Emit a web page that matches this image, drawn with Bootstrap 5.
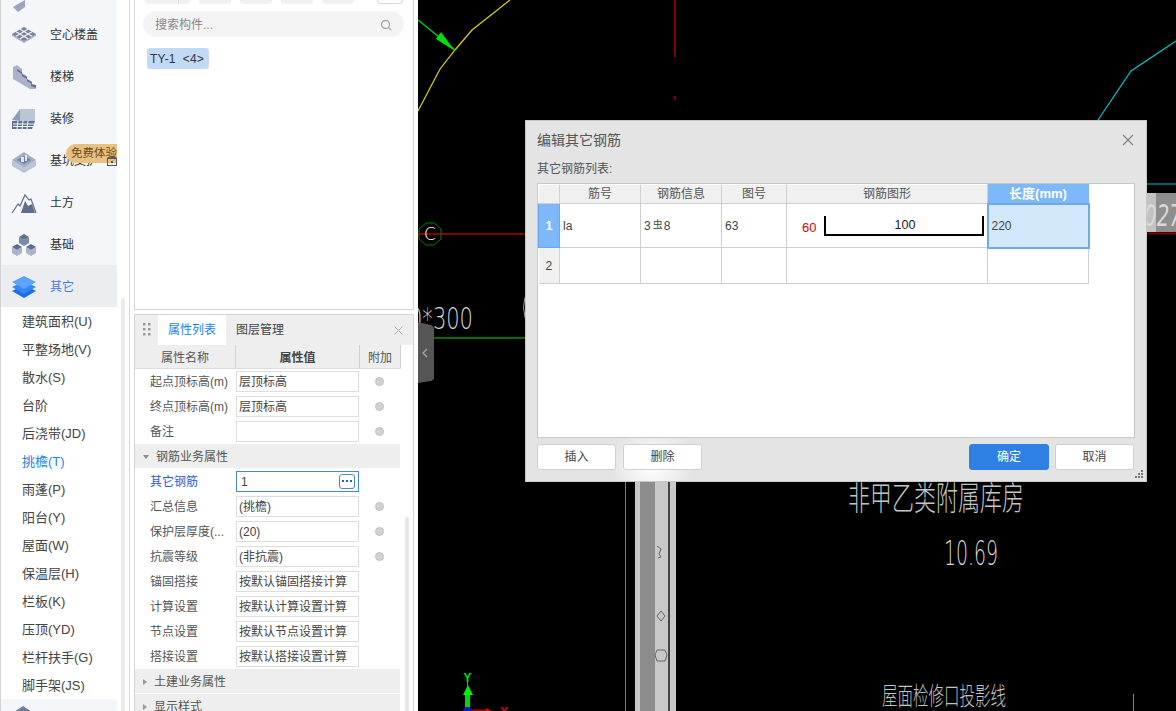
<!doctype html>
<html lang="zh-CN">
<head>
    <meta charset="utf-8">
    <title>编辑其它钢筋</title>
    <link href="https://cdn.jsdelivr.net/npm/bootstrap@5.3.3/dist/css/bootstrap.min.css" rel="stylesheet">
    <style>
        html, body { height: 711px; overflow: hidden; }
        body {
            background: #fff;
            font-family: "Liberation Sans", "Noto Sans CJK SC", sans-serif;
            font-size: 12px;
            color: #444;
            line-height: 1;
        }
        .app-shell { height: 711px; }

        /* left nav */
        .side-nav { width: 117px; flex: none; border-left: 1px solid #d4d4d4; }
        .nav-main { height: 42px; flex: none; padding: 2px 0 0 10px; gap: 13px; background: #f5f6f9; color: #333; }
        .nav-main > svg { width: 26px; height: 26px; flex: none; }
        .nav-clip-top { height: 13px; flex: none; overflow: hidden; background: #f5f6f9; padding-left: 10px; }
        .nav-clip-bottom { height: 12px; flex: none; overflow: hidden; background: #f5f6f9; padding: 2px 0 0 10px; }
        .nav-on { background: #ecedf1; color: #3f7de8; }
        .nav-sub { height: 28px; flex: none; padding-left: 21px; font-size: 13px; color: #444; background: #fff; }
        .nav-sub-on { color: #1c84f0; }
        .free-tag {
            position: absolute; left: 65px; top: 5px; width: 51px; height: 19px;
            background: #e8c080; color: #6b4a1e; border-radius: 10px 0 0 10px;
            font-size: 11.500px; line-height: 19px; padding-left: 5px; white-space: nowrap; overflow: hidden;
        }
        .nav-main > svg.nav-lock { position: absolute; left: 106px; top: 16px; width: 10px; height: 11px; }
        .nav-gutter { width: 13px; flex: none; margin-right: 4px; border-right: 1px solid #d8d8d8; }
        .gutter-thumb { width: 4px; height: 413px; margin-left: 4px; background: #ebebeb; border-radius: 2px 2px 0 0; }

        /* middle panels */
        .panel-col { width: 280px; flex: none; margin-right: 4px; }
        .panel-top { height: 310px; flex: none; border: 1px solid #d4d4d4; border-top: 0; padding: 0 9px 0 8px; }
        .stub-row { height: 11px; gap: 9px; padding-left: 2px; }
        .stub-btn { width: 32px; height: 4px; background: #f2f2f2; border-radius: 0 0 3px 3px; }
        .stub-wide { width: 45px; background: linear-gradient(90deg, #f2f2f2 33px, #ddd 33px, #ddd 34px, #f2f2f2 34px); }
        .stub-end { width: 26px; height: 4px; margin-left: 14px; border: 1px solid #d8d8d8; border-top: 0; border-radius: 0 0 4px 4px; }
        .search-box { height: 26px; border-radius: 13px; background: #f4f4f4; padding: 1px 12px 0; color: #888; font-size: 12px; }
        .comp-tag { margin: 11px 0 0 4px; width: 62px; height: 21px; background: #c2daf5; border-radius: 3px; color: #334; line-height: 22px; padding-left: 3px; white-space: pre; font-size: 12px; letter-spacing: .2px; }
        .panel-prop { margin-top: 4px; flex: 1; min-height: 0; border: 1px solid #d4d4d4; border-bottom: 0; overflow: hidden; position: relative; }
        .prop-head { height: 30px; background: #eee; flex: none; }
        .drag-dots { width: 23px; }
        .prop-tab { width: 68px; height: 30px; background: #fff; color: #1c84f0; font-size: 12px; }
        .prop-tab2 { padding-left: 10px; font-size: 12px; color: #444; }
        .prop-close { margin: 0 10px 0 auto; }
        .prop-cols { height: 24px; flex: none; width: 266px; background: #eee; color: #555; font-size: 12px; }
        .col-a { width: 101px; flex: none; }
        .col-b { width: 124px; flex: none; }
        .col-c { width: 41px; flex: none; }
        .prop-cols > div { height: 24px; padding-top: 2px; border-right: 1px solid #d2d2d2; border-bottom: 1px solid #ddd; }
        .prop-cols .col-b { font-weight: 700; color: #444; }
        .prop-row { height: 25px; flex: none; width: 265px; }
        .prop-name { padding-left: 15px; font-size: 12px; color: #555; white-space: nowrap; }
        .prop-name-on { color: #2a5bd8; }
        .prop-val { width: 123px; height: 21px; border: 1px solid #ddd; padding-left: 2px; font-size: 12px; color: #444; background: #fff; white-space: nowrap; overflow: hidden; }
        .prop-val-on { border-color: #4a86d8; padding-left: 4px; padding-right: 3px; justify-content: space-between; }
        .more-btn { width: 16px; height: 15px; border: 1px solid #4a86d8; border-radius: 3px; }
        .prop-dot { width: 9px; height: 9px; margin-left: 16px; border-radius: 50%; background: #d2d2d2; border: 1px solid #c0c0c0; flex: none; }
        .prop-group { height: 24px; flex: none; width: 265px; margin-bottom: 1px; background: #eee; font-size: 12px; color: #555; padding: 2px 0 0 8px; gap: 7px; }
        .tri-down { width: 0; height: 0; border: 3px solid transparent; border-top: 4px solid #888; border-bottom: 0; }
        .tri-right { width: 0; height: 0; border: 3px solid transparent; border-left: 4px solid #999; border-right: 0; }
        .prop-scroll { position: absolute; left: 270px; top: 202px; width: 4px; height: 200px; background: #e8e8e8; border-radius: 2px; }

        /* cad canvas and dialog */
        .cad-area { flex: 1; background: #000; position: relative; overflow: hidden; }
        .cad-svg { position: absolute; left: 0; top: 0; }
        .edit-dialog {
            position: absolute; left: 107px; top: 120px; width: 622px; height: 362px;
            border: 1px solid #c8c8c8; padding: 0 11px; color: #555;
            background:
                radial-gradient(ellipse 42px 40px at 126px 344px, #fff, rgba(255,255,255,0)),
                #e3e4e3;
        }
        .dlg-title { height: 39px; font-size: 14px; padding-bottom: 2px; }
        .dlg-label { height: 23px; font-size: 12px; color: #555; padding-bottom: 8px; }
        .dlg-close { position: absolute; right: 12px; top: 13px; }
        .dlg-list { height: 255px; background: #fff; border: 1px solid #c8c8c8; }
        .rebar-table { width: 550px; table-layout: fixed; margin: 0; border-collapse: collapse; font-size: 12px; }
        .rebar-table th, .rebar-table td { padding: 0; border: 1px solid #cfcfcf; font-weight: 400; vertical-align: middle; color: #444; }
        .rebar-table tr > :first-child { border-left: 0; }
        .rebar-table thead th { height: 19px; background: #f0f0f0; text-align: center; border-top: 0; color: #555; }
        .rebar-table tbody th { text-align: center; background: #f0f0f0; font-size: 12px; }
        .rebar-table td { padding-left: 3px; }
        .rebar-table .row-one { height: 44px; }
        .rebar-table .row-two { height: 36px; }
        .rebar-table thead .head-on { background: #7db8f8; color: #fff; font-weight: 700; border: 1px solid #7db8f8; font-size: 13px; }
        .rebar-table tbody .row-on { background: #7db8f8; color: #fff; font-weight: 700; border: 1px solid #6ba8ee; }
        .rebar-table .cell-on { background: #d4e8fc; border: 2px solid #6fabec; }
        .rebar-table .cell-shape { padding: 0; }
        .rebar-mark { font-size: 10px; position: relative; top: -2px; margin: 0 1px 0 2px; }
        .dlg-foot { margin-top: 6px; gap: 7px; padding-right: 1px; }
        .dlg-btn { width: 79px; height: 26px; padding: 0; font-size: 12px; line-height: 1; color: #444; background: #fff; border: 1px solid #d0d0d0; border-radius: 3px; }
        .dlg-btn-main { width: 80px; background: #2e80e4; border-color: #2e80e4; color: #fff; margin-left: auto; margin-right: -1px; }
        .dlg-grip { position: absolute; right: 3px; bottom: 3px; }
        .cad-thin { font-family: "DejaVu Sans", "Noto Sans CJK SC", sans-serif; font-weight: 200; fill: #d8d8d8; }
        .cad-cjk { font-family: "Noto Sans CJK SC", sans-serif; font-weight: 300; fill: #c4c4c4; }
    </style>
</head>
<body>

<div class="app-shell d-flex">
    <aside class="side-nav d-flex flex-column">
        <div class="nav-clip-top">
            <svg width="26" height="13" viewBox="0 13 26 13"><path d="M2 20l12-7v7l-7 5z" fill="#9aa5bd"/></svg>
        </div>
        <div class="nav-main d-flex align-items-center">
            <svg viewBox="0 0 26 26"><path d="M1 12v2l12 7 12-7v-2z" fill="#aab3c9"/><path d="M1 12L13 5l12 7-12 7z" fill="#77849f"/><path d="M5 9.670L17 16.670M9 7.330L21 14.330M17 7.330L5 14.330M21 9.670L9 16.670" stroke="#f5f6f9" stroke-width="1.100"/></svg>
            <span>空心楼盖</span>
        </div>
        <div class="nav-main d-flex align-items-center">
            <svg viewBox="0 0 26 26"><path d="M2 3l4-2 5 4v4l5 3v3l5 3v3l4 1v3h-6L2 15z" fill="#aab3c9"/><path d="M6 5l5 3v2L6 7zM11 10l5 3v2l-5-3zM16 15l5 3v2l-5-3zM20 20l5 1v3l-5-2z" fill="#62718f"/></svg>
            <span>楼梯</span>
        </div>
        <div class="nav-main d-flex align-items-center">
            <svg viewBox="0 0 26 26"><path d="M9 3h15v12H9z" fill="#bcc5d8"/><path d="M1 14l8-11v12z" fill="#8f9cb8"/><path d="M1 15h23l-3 8H1z" fill="#62718f"/><path d="M2 18h21M2 20.500h20M7 15l-1 8M12 15l-1 8M17 15l-1 8" stroke="#f5f6f9"/></svg>
            <span>装修</span>
        </div>
        <div class="nav-main d-flex align-items-center position-relative">
            <svg viewBox="0 0 26 26"><path d="M1 12L13 4l12 8-12 8z" fill="#a3adc5"/><path d="M1 12v6l12 7v-5zM25 12v6l-12 7v-5z" fill="#bcc5d8"/><path d="M6 12l7-4 7 4-7 4z" fill="#6e7fa0"/><path d="M10 9h3v5h-3zM14 7h2v6h-2z" fill="#e4e7ef"/></svg>
            <span>基坑支护</span>
            <div class="free-tag">免费体验</div>
            <svg class="nav-lock" viewBox="0 0 10 11"><rect x=".5" y="3.500" width="9" height="7" fill="none" stroke="#556"/><path d="M3 3.500V1.500h4v2" fill="none" stroke="#556"/><circle cx="5" cy="7" r="1.200" fill="#556"/></svg>
        </div>
        <div class="nav-main d-flex align-items-center">
            <svg viewBox="0 0 26 26"><path d="M1 23l6-9 2 2 5-11 4 5 2-1 5 14" fill="none" stroke="#5f6e8c" stroke-width="1.200"/><path d="M10 23l4-12 3 5 4-2 3 9z" fill="#5f6e8c"/></svg>
            <span>土方</span>
        </div>
        <div class="nav-main d-flex align-items-center">
            <svg viewBox="0 0 26 26"><path d="M8 5l5-3 5 3-5 3z" fill="#5f6e8c"/><path d="M8 5v6l5 3V8zM18 5v6l-5 3V8z" fill="#7c8aa8"/><path d="M1 15l5-3 5 3-5 3z" fill="#5f6e8c"/><path d="M1 15v6l5 3v-6zM11 15v6l-5 3v-6z" fill="#aab3c9"/><path d="M15 15l5-3 5 3-5 3z" fill="#5f6e8c"/><path d="M15 15v6l5 3v-6zM25 15v6l-5 3v-6z" fill="#aab3c9"/></svg>
            <span>基础</span>
        </div>
        <div class="nav-main nav-on d-flex align-items-center">
            <svg viewBox="0 0 26 26"><path d="M1 17l12-6 12 6-12 7z" fill="#1a6fe8"/><path d="M1 13l12-6 12 6-12 7z" fill="#3587f2"/><path d="M1 8l12-6 12 6-12 7z" fill="#5aa4fb"/></svg>
            <span>其它</span>
        </div>
        <div class="nav-sub d-flex align-items-center">建筑面积(U)</div>
        <div class="nav-sub d-flex align-items-center">平整场地(V)</div>
        <div class="nav-sub d-flex align-items-center">散水(S)</div>
        <div class="nav-sub d-flex align-items-center">台阶</div>
        <div class="nav-sub d-flex align-items-center">后浇带(JD)</div>
        <div class="nav-sub nav-sub-on d-flex align-items-center">挑檐(T)</div>
        <div class="nav-sub d-flex align-items-center">雨蓬(P)</div>
        <div class="nav-sub d-flex align-items-center">阳台(Y)</div>
        <div class="nav-sub d-flex align-items-center">屋面(W)</div>
        <div class="nav-sub d-flex align-items-center">保温层(H)</div>
        <div class="nav-sub d-flex align-items-center">栏板(K)</div>
        <div class="nav-sub d-flex align-items-center">压顶(YD)</div>
        <div class="nav-sub d-flex align-items-center">栏杆扶手(G)</div>
        <div class="nav-sub d-flex align-items-center">脚手架(JS)</div>
        <div class="nav-clip-bottom">
            <svg width="26" height="10" viewBox="0 0 26 10"><path d="M3 9l9-6 9 6z" fill="#6e7fa0"/></svg>
        </div>
    </aside>
    <div class="nav-gutter d-flex flex-column justify-content-end"><div class="gutter-thumb"></div></div>

    <div class="panel-col d-flex flex-column">
        <div class="panel-top">
            <div class="stub-row d-flex">
                <div class="stub-btn stub-wide"></div>
                <div class="stub-btn"></div>
                <div class="stub-btn"></div>
                <div class="stub-btn"></div>
                <div class="stub-btn"></div>
                <div class="stub-end"></div>
            </div>
            <div class="search-box d-flex align-items-center justify-content-between">
                <span>搜索构件...</span>
                <svg width="12" height="12" viewBox="0 0 12 12"><circle cx="5.500" cy="5.500" r="4" fill="none" stroke="#a8a8a8" stroke-width="1.300"/><path d="M8.500 8.500L11 11" stroke="#a8a8a8" stroke-width="1.300"/></svg>
            </div>
            <div class="comp-tag">TY-1  &lt;4&gt;</div>
        </div>

        <div class="panel-prop d-flex flex-column">
            <div class="prop-head d-flex align-items-center">
                <div class="drag-dots d-flex justify-content-center">
                    <svg width="8" height="14" viewBox="0 0 8 14" fill="#999"><rect width="2.500" height="2.500"/><rect x="5" width="2.500" height="2.500"/><rect y="5" width="2.500" height="2.500"/><rect x="5" y="5" width="2.500" height="2.500"/><rect y="10" width="2.500" height="2.500"/><rect x="5" y="10" width="2.500" height="2.500"/></svg>
                </div>
                <div class="prop-tab d-flex align-items-center justify-content-center">属性列表</div>
                <div class="prop-tab2">图层管理</div>
                <svg class="prop-close" width="9" height="9" viewBox="0 0 9 9"><path d="M.5.500l8 8M8.500.500l-8 8" stroke="#aaa"/></svg>
            </div>
            <div class="prop-cols d-flex">
                <div class="col-a d-flex align-items-center justify-content-center">属性名称</div>
                <div class="col-b d-flex align-items-center justify-content-center">属性值</div>
                <div class="col-c d-flex align-items-center justify-content-center">附加</div>
            </div>

            <div class="prop-row d-flex align-items-center"><div class="col-a prop-name">起点顶标高(m)</div><div class="prop-val d-flex align-items-center">层顶标高</div><div class="prop-dot"></div></div>
            <div class="prop-row d-flex align-items-center"><div class="col-a prop-name">终点顶标高(m)</div><div class="prop-val d-flex align-items-center">层顶标高</div><div class="prop-dot"></div></div>
            <div class="prop-row d-flex align-items-center"><div class="col-a prop-name">备注</div><div class="prop-val d-flex align-items-center"></div><div class="prop-dot"></div></div>
            <div class="prop-group d-flex align-items-center"><span class="tri-down"></span>钢筋业务属性</div>
            <div class="prop-row d-flex align-items-center"><div class="col-a prop-name prop-name-on">其它钢筋</div><div class="prop-val prop-val-on d-flex align-items-center"><span>1</span><span class="more-btn d-flex align-items-center justify-content-center"><svg width="10" height="3" viewBox="0 0 10 3" fill="#2a5bd8"><rect width="2" height="2"/><rect x="4" width="2" height="2"/><rect x="8" width="2" height="2"/></svg></span></div></div>
            <div class="prop-row d-flex align-items-center"><div class="col-a prop-name">汇总信息</div><div class="prop-val d-flex align-items-center">(挑檐)</div><div class="prop-dot"></div></div>
            <div class="prop-row d-flex align-items-center"><div class="col-a prop-name">保护层厚度(...</div><div class="prop-val d-flex align-items-center">(20)</div><div class="prop-dot"></div></div>
            <div class="prop-row d-flex align-items-center"><div class="col-a prop-name">抗震等级</div><div class="prop-val d-flex align-items-center">(非抗震)</div><div class="prop-dot"></div></div>
            <div class="prop-row d-flex align-items-center"><div class="col-a prop-name">锚固搭接</div><div class="prop-val d-flex align-items-center">按默认锚固搭接计算</div></div>
            <div class="prop-row d-flex align-items-center"><div class="col-a prop-name">计算设置</div><div class="prop-val d-flex align-items-center">按默认计算设置计算</div></div>
            <div class="prop-row d-flex align-items-center"><div class="col-a prop-name">节点设置</div><div class="prop-val d-flex align-items-center">按默认节点设置计算</div></div>
            <div class="prop-row d-flex align-items-center"><div class="col-a prop-name">搭接设置</div><div class="prop-val d-flex align-items-center">按默认搭接设置计算</div></div>
            <div class="prop-group d-flex align-items-center"><span class="tri-right"></span>土建业务属性</div>
            <div class="prop-group d-flex align-items-center"><span class="tri-right"></span>显示样式</div>
            <div class="prop-scroll"></div>
        </div>
    </div>

    <main class="cad-area">
        <svg class="cad-svg" width="758" height="711" viewBox="418 0 758 711">
            <polyline points="510,0 472,30 455,50 440,69 418,111" fill="none" stroke="#d8d800" stroke-width="1.200"/>
            <path d="M418 20L455 50" stroke="#00e000" stroke-width="1.200"/>
            <path d="M455 51L436 39 441 32z" fill="#00e000"/>
            <path d="M675 0V57M675 96V100" stroke="#b00000" stroke-width="1.500"/>
            <polyline points="1098,120 1131,71 1176,41" fill="none" stroke="#00c8c8" stroke-width="1.200"/>
            <path d="M418 234H526" stroke="#800000" stroke-width="2"/>
            <polygon points="426,223 434,223 441,229 441,239 434,245 426,245 419,239 419,229" fill="none" stroke="#0a7a0a"/>
            <text x="430" y="240" text-anchor="middle" font-size="17" fill="#fff" font-family="DejaVu Sans" font-weight="200">C</text>
            <text class="cad-thin" x="409" y="329" font-size="30" textLength="64" lengthAdjust="spacingAndGlyphs">0*300</text>
            <path d="M434 338H526" stroke="#00e000" stroke-width="1.200"/>
            <path d="M525 297q-3 10 0 21" fill="none" stroke="#999"/>
            <path d="M418 322l13 3q3 1 3 4v49q0 2-3 3l-13 2z" fill="#555"/>
            <path d="M427 349l-4 4 4 4" fill="none" stroke="#aaa" stroke-width="1.200"/>

            <path d="M1147 184H1176" stroke="#00c8c8"/>
            <rect x="1147" y="193" width="29" height="39" fill="#8e8e8e"/>
            <rect x="1147" y="193" width="9" height="39" fill="#d8d8d8" opacity=".7"/>
            <text class="cad-thin" x="1144" y="226" font-size="30" font-style="italic" textLength="38" lengthAdjust="spacingAndGlyphs">027</text>
            <path d="M1147 233.500H1176" stroke="#800000" stroke-width="2"/>

            <path d="M625.500 482V711" stroke="#c8640a"/>
            <rect x="635" y="482" width="41" height="229" fill="#c8c8c8"/>
            <rect x="640" y="482" width="15" height="229" fill="#8c8c8c"/>
            <path d="M669 482V711" stroke="#444" stroke-width="2"/>
            <path d="M657 546l4 3-2 5 2 3-3 1" fill="none" stroke="#666"/>
            <polygon points="661,611 665,616 661,621 657,616" fill="none" stroke="#666"/>
            <polygon points="657,650 665,650 667,655 665,661 657,661 655,655" fill="none" stroke="#666"/>

            <text class="cad-cjk" transform="translate(848 510) scale(1 1.500)" font-size="22">非甲乙类附属库房</text>
            <text class="cad-thin" x="944" y="565" font-size="34" textLength="54" lengthAdjust="spacingAndGlyphs">10.69</text>
            <text class="cad-cjk" transform="translate(882 705) scale(1 1.600)" font-size="15.500">屋面检修口投影线</text>
            <path d="M1133.500 694V711" stroke="#00e000"/>

            <rect x="465" y="695" width="5" height="14" fill="#00d800"/>
            <path d="M468 685l5 10h-10z" fill="#00f000"/>
            <path d="M467.500 680V686" stroke="#00e000"/>
            <text x="467.500" y="682" text-anchor="middle" font-size="12" font-weight="700" fill="#00e000" font-family="Liberation Sans">Y</text>
            <path d="M472 710.500H487" stroke="#b00000" stroke-width="2"/>
            <path d="M486 708l8 4h-8z" fill="#e00000"/>
            <text x="504" y="716" text-anchor="middle" font-size="12" font-weight="700" fill="#e00000" font-family="Liberation Sans">X</text>
            <circle cx="467.500" cy="712" r="5" fill="#1010d0"/>
        </svg>

        <div class="edit-dialog">
            <div class="dlg-title d-flex align-items-center">编辑其它钢筋</div>
            <svg class="dlg-close" width="12" height="12" viewBox="0 0 12 12"><path d="M1 1l10 10M11 1L1 11" stroke="#808080" stroke-width="1.100"/></svg>
            <div class="dlg-label d-flex align-items-end">其它钢筋列表:</div>
            <div class="dlg-list">
                <table class="rebar-table">
                    <colgroup>
                        <col style="width:21px"><col style="width:81px"><col style="width:81px"><col style="width:65px"><col style="width:201px"><col style="width:101px">
                    </colgroup>
                    <thead>
                        <tr>
                            <th></th><th>筋号</th><th>钢筋信息</th><th>图号</th><th>钢筋图形</th><th class="head-on">长度(mm)</th>
                        </tr>
                    </thead>
                    <tbody>
                        <tr class="row-one">
                            <th class="row-on">1</th>
                            <td>la</td>
                            <td>3<span class="rebar-mark">虫</span>8</td>
                            <td>63</td>
                            <td class="cell-shape">
                                <svg class="d-block" width="200" height="43" viewBox="787 204 200 43">
                                    <text x="802" y="232" font-size="13" fill="#e00000" font-family="Liberation Sans">60</text>
                                    <path d="M825 216V235H983V216" fill="none" stroke="#000" stroke-width="2"/>
                                    <text x="905" y="229" text-anchor="middle" font-size="12.500" fill="#222" font-family="Liberation Sans">100</text>
                                </svg>
                            </td>
                            <td class="cell-on">220</td>
                        </tr>
                        <tr class="row-two">
                            <th>2</th><td></td><td></td><td></td><td></td><td></td>
                        </tr>
                    </tbody>
                </table>
            </div>
            <div class="dlg-foot d-flex">
                <button class="btn dlg-btn" type="button">插入</button>
                <button class="btn dlg-btn" type="button">删除</button>
                <button class="btn dlg-btn dlg-btn-main" type="button">确定</button>
                <button class="btn dlg-btn" type="button">取消</button>
            </div>
            <svg class="dlg-grip" width="8" height="8" viewBox="0 0 8 8" fill="#777"><rect x="6" width="2" height="2"/><rect x="3" y="3" width="2" height="2"/><rect x="6" y="3" width="2" height="2"/><rect y="6" width="2" height="2"/><rect x="3" y="6" width="2" height="2"/><rect x="6" y="6" width="2" height="2"/></svg>
        </div>
    </main>
</div>

<script src="https://cdn.jsdelivr.net/npm/bootstrap@5.3.3/dist/js/bootstrap.bundle.min.js"></script>
</body>
</html>
